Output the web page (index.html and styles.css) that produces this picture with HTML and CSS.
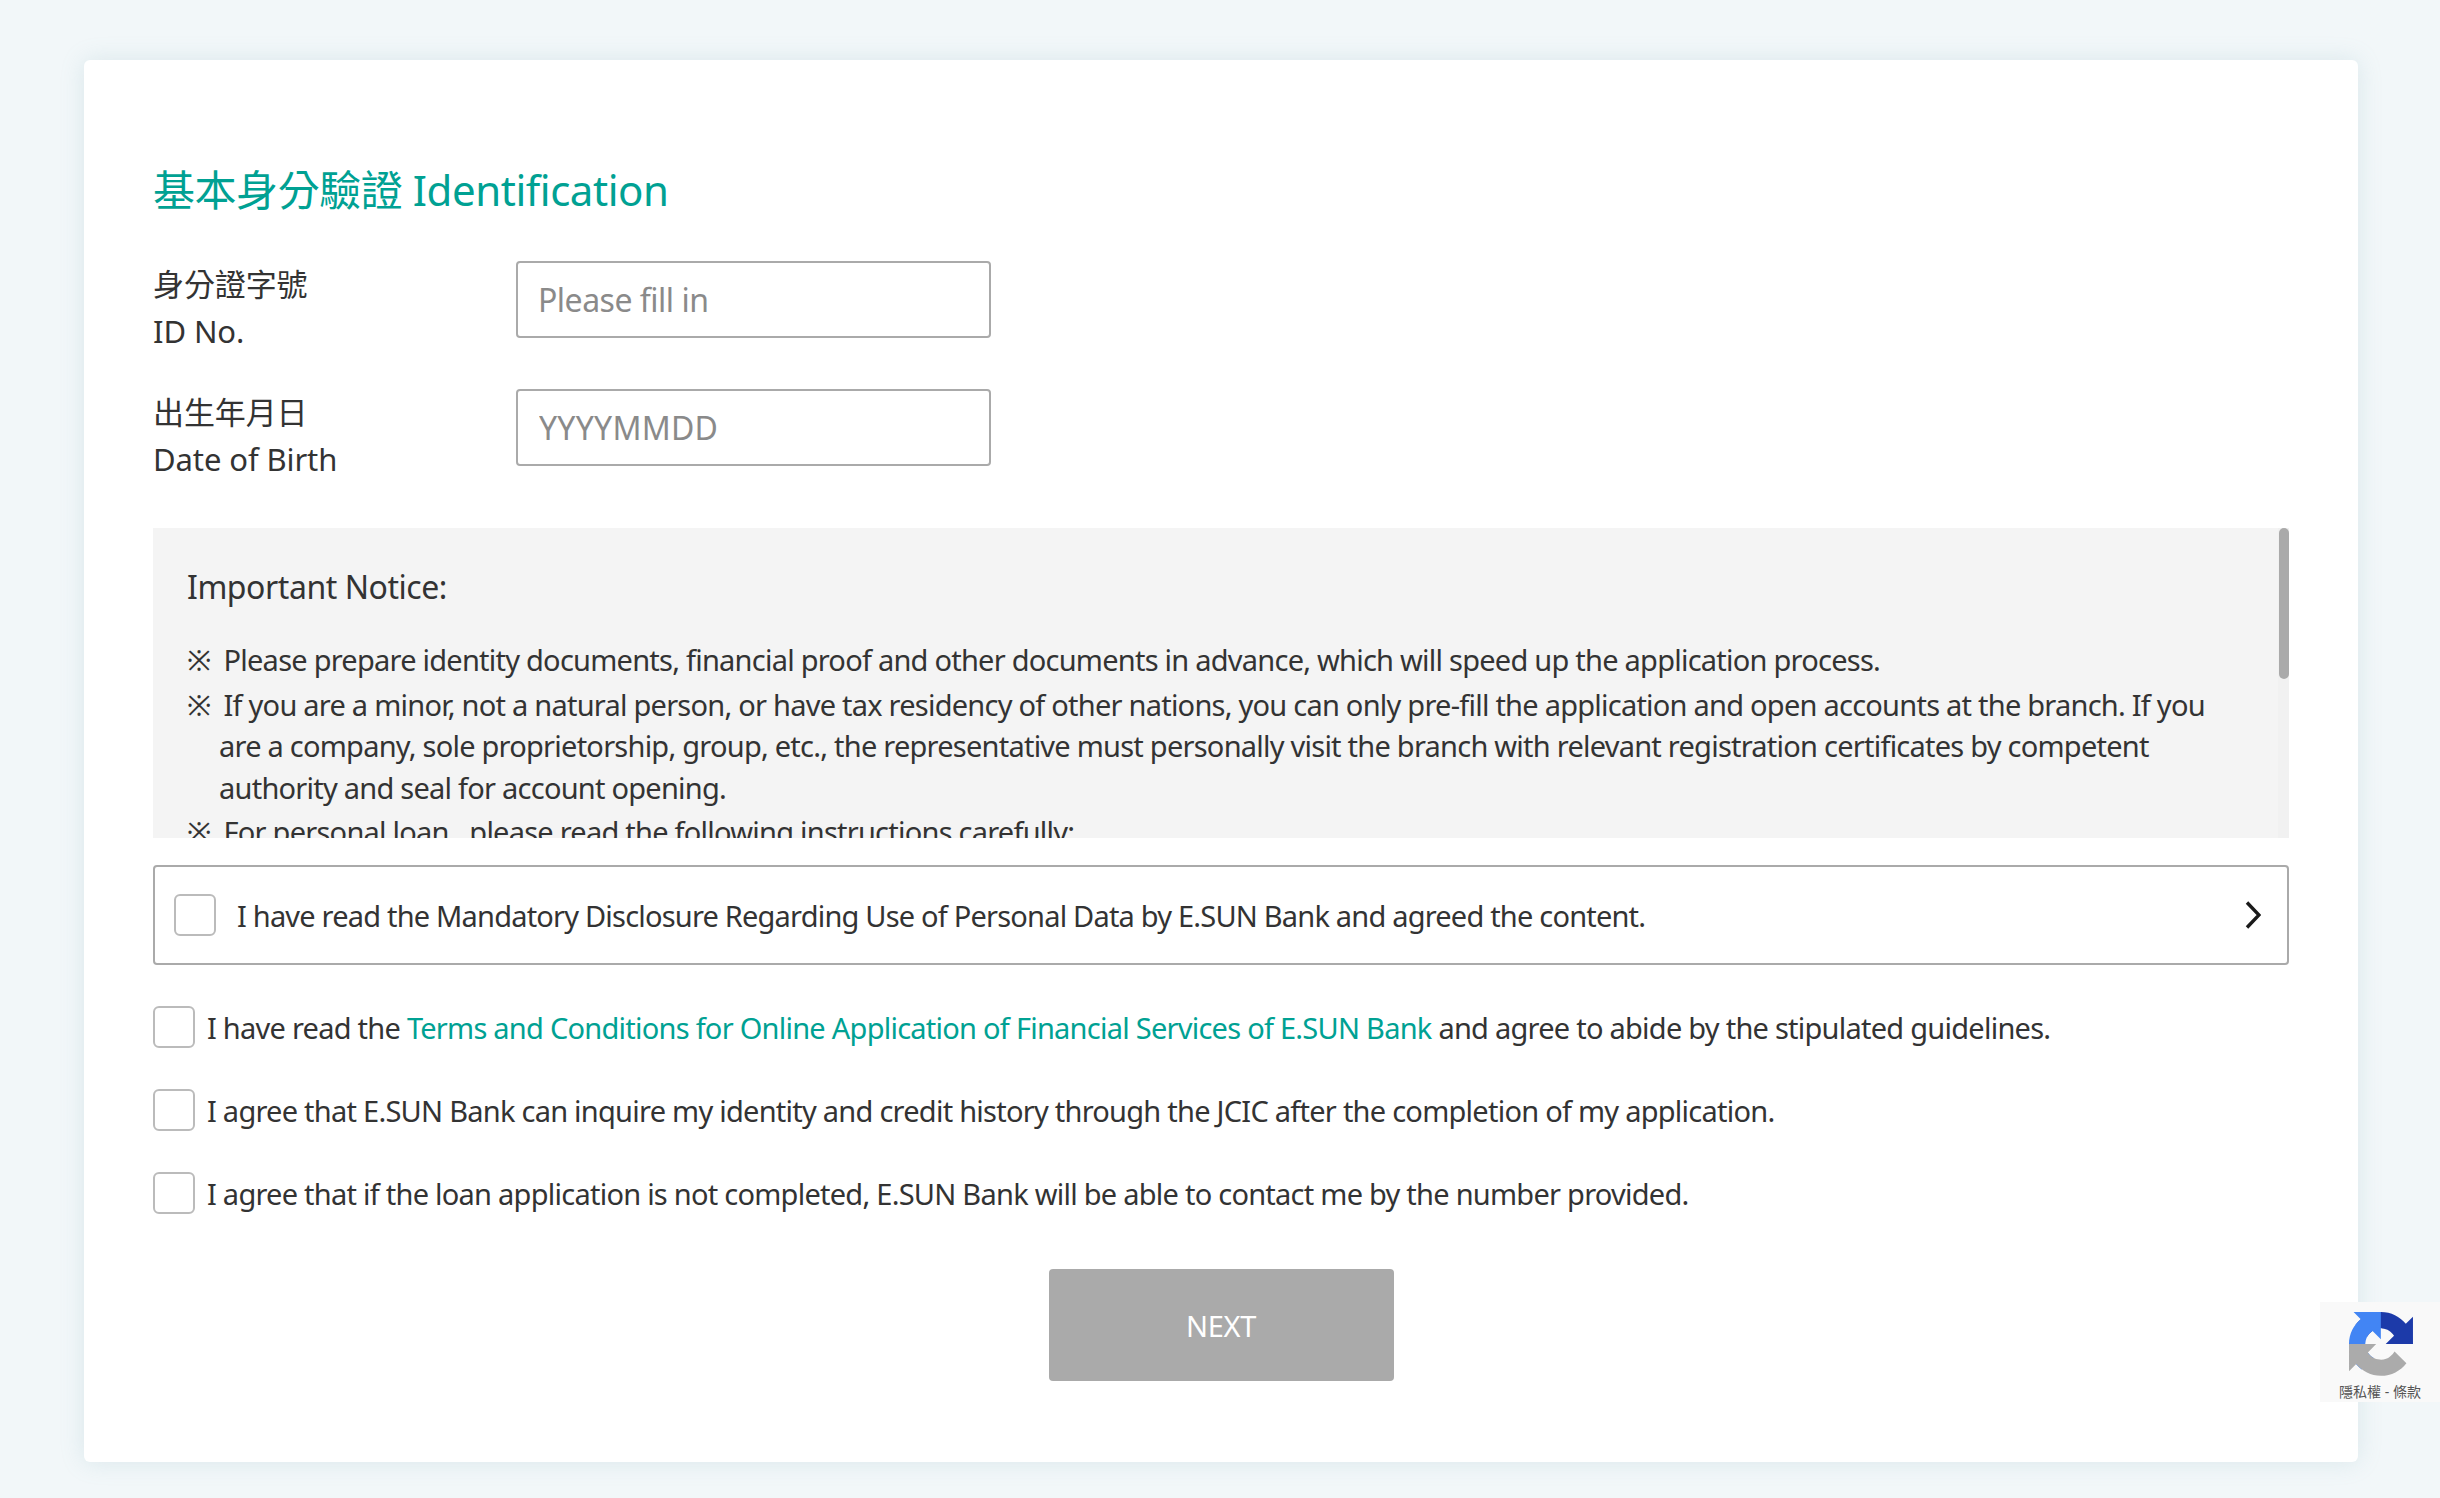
FILE: index.html
```html
<!DOCTYPE html>
<html lang="zh-Hant">
<head>
<meta charset="utf-8">
<title>Identification</title>
<link rel="stylesheet" href="styles.css">
</head>
<body>
<main class="card">
  <h1 class="title">基本身分驗證 Identification</h1>
  <div class="field">
    <label class="field-label" for="id-no">身分證字號<br>ID No.</label>
    <input class="field-input field-input-tight" id="id-no" type="text" placeholder="Please fill in">
  </div>
  <div class="field">
    <label class="field-label" for="dob">出生年月日<br>Date of Birth</label>
    <input class="field-input" id="dob" type="text" placeholder="YYYYMMDD">
  </div>
  <section class="notice">
    <div class="notice-body">
      <h2 class="notice-title">Important Notice:</h2>
      <p class="notice-item"><span class="mark">※</span>Please prepare identity documents, financial proof and other documents in advance, which will speed up the application process.</p>
      <p class="notice-item"><span class="mark">※</span>If you are a minor, not a natural person, or have tax residency of other nations, you can only pre-fill the application and open accounts at the branch. If you are a company, sole proprietorship, group, etc., the representative must personally visit the branch with relevant registration certificates by competent authority and seal for account opening.</p>
      <p class="notice-item"><span class="mark">※</span>For personal loan,&nbsp; please read the following instructions carefully:</p>
    </div>
    <div class="scroll-track"><div class="scroll-thumb"></div></div>
  </section>
  <div class="disclosure">
    <span class="box"></span>
    <span class="disclosure-text">I have read the Mandatory Disclosure Regarding Use of Personal Data by E.SUN Bank and agreed the content.</span>
    <svg class="chevron" viewBox="0 0 16 28" aria-hidden="true"><path d="M2 1.5l12 12.5L2 26.5" fill="none" stroke="#1a1a1a" stroke-width="3.4"/></svg>
  </div>
  <div class="agree-list">
    <label class="agree"><span class="box"></span><span>I have read the <a class="link" href="#">Terms and Conditions for Online Application of Financial Services of E.SUN Bank</a> and agree to abide by the stipulated guidelines.</span></label>
    <label class="agree"><span class="box"></span><span>I agree that E.SUN Bank can inquire my identity and credit history through the JCIC after the completion of my application.</span></label>
    <label class="agree"><span class="box"></span><span>I agree that if the loan application is not completed, E.SUN Bank will be able to contact me by the number provided.</span></label>
  </div>
  <button class="next" type="button">NEXT</button>
</main>
<aside class="recaptcha">
  <svg class="recaptcha-logo" viewBox="0 0 64 64" aria-hidden="true">
    <path d="M64 31.955l-.033-1.37V4.687l-7.16 7.16C50.948 4.674 42.033.093 32.05.093c-10.4 0-19.622 4.96-25.458 12.64l11.736 11.86a15.55 15.55 0 0 1 4.754-5.334c2.05-1.6 4.952-2.906 8.968-2.906.485 0 .86.057 1.135.163 4.976.393 9.288 3.14 11.828 7.124l-8.307 8.307 32.28.001" fill="#1c3aa9"/>
    <path d="M31.862.001l-1.37.033H4.594l7.16 7.16C4.58 13.05 0 21.967 0 31.95c0 10.4 4.96 19.622 12.64 25.458l11.86-11.736a15.55 15.55 0 0 1-5.334-4.754c-1.6-2.05-2.906-4.952-2.906-8.968 0-.485.057-.86.163-1.135.393-4.976 3.14-9.288 7.124-11.828l8.307 8.307L31.862.001" fill="#4285f4"/>
    <path d="M.001 31.955l.033 1.37v25.898l7.16-7.16c5.86 7.173 14.774 11.754 24.76 11.754 10.4 0 19.622-4.96 25.458-12.64l-11.86-11.736a15.55 15.55 0 0 1-4.754 5.334c-2.05 1.6-4.952 2.906-8.968 2.906-.485 0-.86-.057-1.135-.163-4.976-.393-9.288-3.14-11.828-7.124l8.307-8.307-32.28-.001" fill="#ababab"/>
  </svg>
  <div class="recaptcha-text">隱私權 - 條款</div>
</aside>
</body>
</html>
```
FILE: styles.css
```css
* { box-sizing: border-box; }
html, body { margin: 0; height: 100%; overflow: hidden; }
body {
  background: #f2f7f9;
  font-family: "Noto Sans", "Noto Sans CJK TC", sans-serif;
  color: #333;
  font-size: 29px;
  letter-spacing: -0.75px;
  padding: 60px 82px 36px 84px;
}
.card {
  background: #fff;
  height: 1402px;
  border-radius: 6px;
  box-shadow: 0 0 24px rgba(120, 170, 180, .2);
  padding: 98px 69px 0;
  display: flex;
  flex-direction: column;
}
.title {
  margin: 0 0 39px;
  font-size: 42px;
  line-height: 64px;
  font-weight: 400;
  letter-spacing: -0.45px;
  color: #00a193;
}
.field { display: flex; height: 128px; }
.field-label { width: 363px; line-height: 47px; font-size: 31px; letter-spacing: -0.1px; }
.field-input {
  width: 475px;
  height: 77px;
  border: 2px solid #aaa;
  border-radius: 4px;
  padding: 0 21px;
  font: inherit;
  font-size: 32px;
  letter-spacing: 0.25px;
  color: #333;
  outline: none;
}
.field-input-tight { letter-spacing: -0.5px; padding-left: 20px; }
.field-input::placeholder { color: #8a8a8a; opacity: 1; }
.notice {
  position: relative;
  height: 310px;
  margin-top: 11px;
  background: #f4f4f4;
  overflow: hidden;
}
.notice-body { padding: 34px 60px 0 34px; }
.notice-title {
  margin: 0 0 27px;
  font-size: 32px;
  line-height: 50px;
  font-weight: 400;
  letter-spacing: -0.45px;
}
.notice-item {
  margin: 0 0 3px;
  padding-left: 32px;
  text-indent: -32px;
  line-height: 41.5px;
  font-size: 29px;
  letter-spacing: -0.76px;
}
.mark { margin-right: 13px; }
.scroll-track {
  position: absolute;
  top: 0;
  right: 0;
  bottom: 0;
  width: 11px;
  background: #f1f1f1;
}
.scroll-thumb {
  width: 10px;
  height: 151px;
  margin-left: 1px;
  border-radius: 5px;
  background: #aaa;
}
.disclosure {
  margin-top: 27px;
  height: 100px;
  border: 2px solid #aaa;
  border-radius: 4px;
  display: flex;
  align-items: center;
  padding: 0 26px 0 19px;
  gap: 21px;
  letter-spacing: -0.8px;
}
.disclosure-text { flex: 1; }
.box {
  flex: none;
  width: 42px;
  height: 42px;
  border: 2px solid #bbb;
  border-radius: 6px;
  background: #fff;
}
.chevron { width: 16px; height: 28px; flex: none; }
.agree-list { margin-top: 41px; display: flex; flex-direction: column; gap: 41px; }
.agree { display: flex; align-items: center; gap: 12px; height: 42px; }
.link { color: #00a193; text-decoration: none; }
.next {
  align-self: center;
  margin-top: 55px;
  width: 345px;
  height: 112px;
  border: 0;
  border-radius: 4px;
  background: #aaa;
  color: #fff;
  font: inherit;
  font-size: 29px;
  letter-spacing: -0.3px;
}
.recaptcha {
  position: fixed;
  right: 0;
  top: 1302px;
  width: 120px;
  height: 100px;
  background: #f9f9f9;
  display: flex;
  flex-direction: column;
  align-items: center;
  padding-top: 9px;
}
.recaptcha-logo { width: 64px; height: 66px; margin-left: 1px; }
.recaptcha-text { font-size: 14px; line-height: 20px; margin-top: 5px; color: #555; letter-spacing: 0; white-space: nowrap; }
```
